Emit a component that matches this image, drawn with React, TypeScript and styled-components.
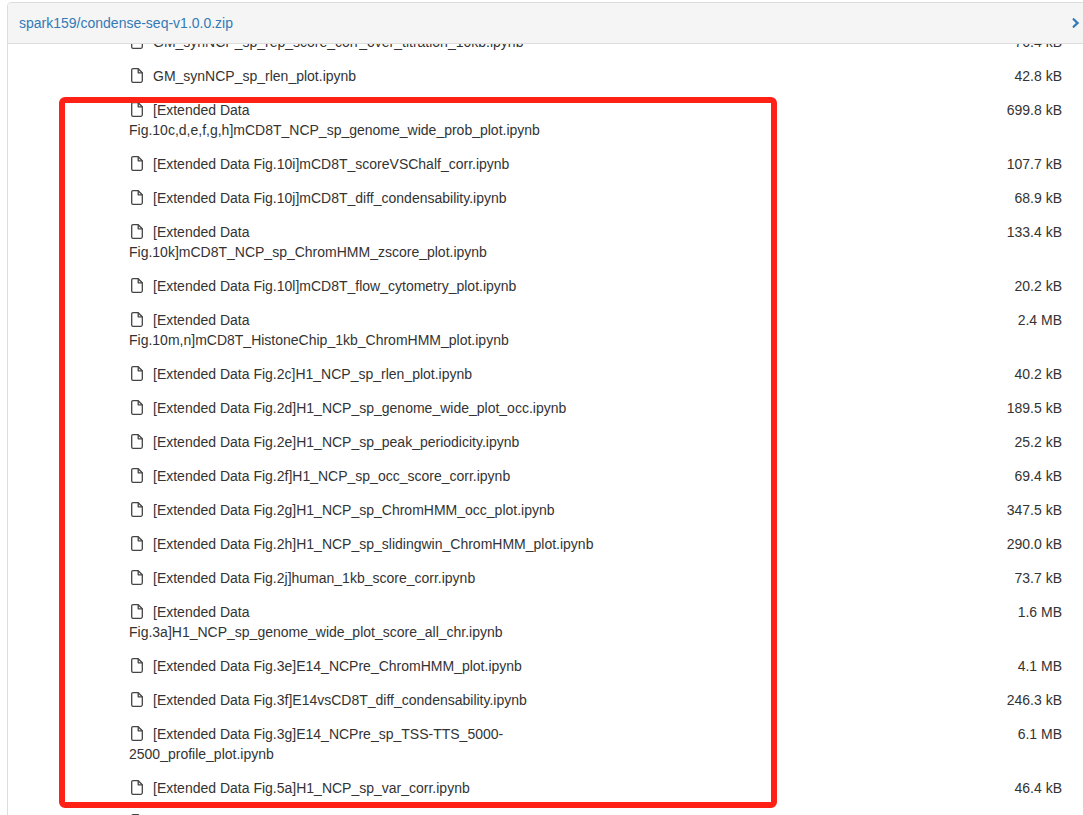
import React from "react";
import styled, { createGlobalStyle } from "styled-components";

const Global = createGlobalStyle`
  html, body { margin: 0; padding: 0; height: 100%; overflow: hidden; background: #fff; }
  body { font-family: "Liberation Sans", Arial, sans-serif; font-size: 14px; line-height: 20px; color: #333; }
`;

const Page = styled.div`
  position: relative;
  height: 815px;
  overflow: hidden;
  padding: 2px 0 0 7px;
  box-sizing: border-box;
`;

const Panel = styled.section`
  width: 1200px;
  height: 900px;
  border: 1px solid #ddd;
  border-radius: 4px 0 0 0;
  display: flex;
  flex-direction: column;
`;

const Header = styled.header`
  flex: none;
  padding: 0 128px 0 11px;
  height: 40px;
  display: flex;
  align-items: center;
  justify-content: space-between;
  background: #f5f5f5;
  border-bottom: 1px solid #ddd;
  border-radius: 3px 0 0 0;
`;

const RepoLink = styled.a`
  color: #337ab7;
  text-decoration: none;
`;

const Chevron = styled.svg`
  width: 8px;
  height: 12px;
  color: #337ab7;
`;

const Body = styled.div`
  flex: 1;
  overflow: hidden;
`;

const List = styled.ul`
  list-style: none;
  margin: -19px 0 0;
  padding: 0 0 0 121px;
  width: 933px;
`;

const Row = styled.li`
  display: flex;
  justify-content: space-between;
  align-items: flex-start;
  padding: 7px 0;
`;

const Name = styled.div`
  width: 472px;
`;

const FileIcon = styled.svg`
  width: 12px;
  height: 15px;
  margin: 0 10px 0 2px;
  vertical-align: -2px;
  color: #444;
`;

const Size = styled.div`
  white-space: nowrap;
`;

const Highlight = styled.div`
  position: absolute;
  left: 59px;
  top: 97px;
  width: 718px;
  height: 711px;
  box-sizing: border-box;
  border: 6px solid #ff2116;
  border-radius: 6px;
  pointer-events: none;
`;

const files: [string, string][] = [
  ["GM_synNCP_sp_rep_score_corr_over_titration_10kb.ipynb", "76.4 kB"],
  ["GM_synNCP_sp_rlen_plot.ipynb", "42.8 kB"],
  ["[Extended Data Fig.10c,d,e,f,g,h]mCD8T_NCP_sp_genome_wide_prob_plot.ipynb", "699.8 kB"],
  ["[Extended Data Fig.10i]mCD8T_scoreVSChalf_corr.ipynb", "107.7 kB"],
  ["[Extended Data Fig.10j]mCD8T_diff_condensability.ipynb", "68.9 kB"],
  ["[Extended Data Fig.10k]mCD8T_NCP_sp_ChromHMM_zscore_plot.ipynb", "133.4 kB"],
  ["[Extended Data Fig.10l]mCD8T_flow_cytometry_plot.ipynb", "20.2 kB"],
  ["[Extended Data Fig.10m,n]mCD8T_HistoneChip_1kb_ChromHMM_plot.ipynb", "2.4 MB"],
  ["[Extended Data Fig.2c]H1_NCP_sp_rlen_plot.ipynb", "40.2 kB"],
  ["[Extended Data Fig.2d]H1_NCP_sp_genome_wide_plot_occ.ipynb", "189.5 kB"],
  ["[Extended Data Fig.2e]H1_NCP_sp_peak_periodicity.ipynb", "25.2 kB"],
  ["[Extended Data Fig.2f]H1_NCP_sp_occ_score_corr.ipynb", "69.4 kB"],
  ["[Extended Data Fig.2g]H1_NCP_sp_ChromHMM_occ_plot.ipynb", "347.5 kB"],
  ["[Extended Data Fig.2h]H1_NCP_sp_slidingwin_ChromHMM_plot.ipynb", "290.0 kB"],
  ["[Extended Data Fig.2j]human_1kb_score_corr.ipynb", "73.7 kB"],
  ["[Extended Data Fig.3a]H1_NCP_sp_genome_wide_plot_score_all_chr.ipynb", "1.6 MB"],
  ["[Extended Data Fig.3e]E14_NCPre_ChromHMM_plot.ipynb", "4.1 MB"],
  ["[Extended Data Fig.3f]E14vsCD8T_diff_condensability.ipynb", "246.3 kB"],
  ["[Extended Data Fig.3g]E14_NCPre_sp_TSS-TTS_5000-2500_profile_plot.ipynb", "6.1 MB"],
  ["[Extended Data Fig.5a]H1_NCP_sp_var_corr.ipynb", "46.4 kB"],
  ["", ""],
];

function File() {
  return (
    <FileIcon viewBox="0 0 12 15" fill="none" stroke="currentColor" strokeWidth="1.3">
      <path d="M2 .7h5.2L11.3 4.8V12.8a1.5 1.5 0 0 1-1.5 1.5H2A1.3 1.3 0 0 1 .7 13V2A1.3 1.3 0 0 1 2 .7Z" strokeLinejoin="round" />
      <path d="M7.2 .7V4.8h4.1" strokeLinejoin="round" />
    </FileIcon>
  );
}

export default function App() {
  return (
    <Page>
      <Global />
      <Panel>
        <Header>
          <RepoLink href="#">spark159/condense-seq-v1.0.0.zip</RepoLink>
          <Chevron viewBox="0 0 8 12">
            <path d="M1.6 .8 7.2 6 1.6 11.2 .3 9.6 3.9 6 .3 2.4Z" fill="currentColor" />
          </Chevron>
        </Header>
        <Body>
          <List>
            {files.map(([name, size]) => (
              <Row key={name}>
                <Name>
                  <File />
                  {name}
                </Name>
                <Size>{size}</Size>
              </Row>
            ))}
          </List>
        </Body>
      </Panel>
      <Highlight />
    </Page>
  );
}
